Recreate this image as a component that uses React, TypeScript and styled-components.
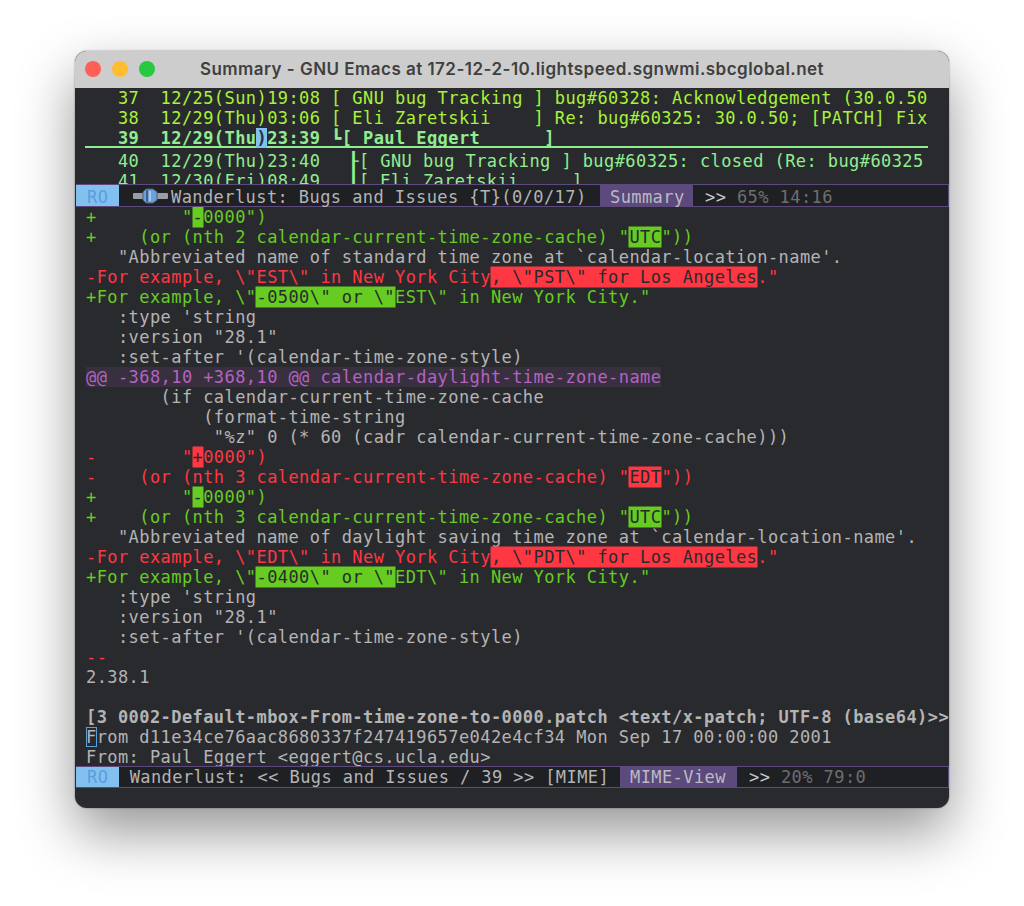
import * as React from 'react'
import styled, { createGlobalStyle } from 'styled-components'

const CELL = 10.64

const GlobalStyle = createGlobalStyle`
  html, body {
    margin: 0;
    background: #fff;
  }
`

const Page = styled.div`
  width: 1024px;
  height: 906px;
  padding: 51px 75px 0;
  box-sizing: border-box;
  overflow: hidden;
`

const Window = styled.div`
  width: 874px;
  height: 757px;
  display: flex;
  flex-direction: column;
  border-radius: 12px;
  overflow: hidden;
  background: #292a2e;
  box-shadow: 0 24px 56px rgba(0, 0, 0, 0.42), 0 0 2px rgba(0, 0, 0, 0.45);
  font-family: 'DejaVu Sans Mono', 'Liberation Mono', monospace;
  font-size: 17px;
  letter-spacing: 0.42px;
  color: #b4b4b4;
`

const TitleBar = styled.div`
  height: 37px;
  flex: none;
  display: flex;
  align-items: center;
  position: relative;
  padding: 0 0 2px 10px;
  box-sizing: border-box;
  gap: 11px;
  background: #cdcdcd;
`

const Light = styled.span<{ $color: string }>`
  width: 16px;
  height: 16px;
  border-radius: 50%;
  background: ${(p) => p.$color};
`

const Title = styled.div`
  position: absolute;
  left: 0;
  right: 0;
  text-align: center;
  font-family: Inter, 'Liberation Sans', sans-serif;
  font-size: 17px;
  font-weight: 600;
  letter-spacing: 0.47px;
  color: #3f3f3f;
`

const SummaryPane = styled.div`
  height: 96px;
  flex: none;
  overflow: hidden;
  padding-left: 11px;
`

const Row = styled.div<{ $color?: string }>`
  height: 20px;
  line-height: 20px;
  white-space: pre;
  color: ${(p) => p.$color ?? 'inherit'};
`

const SelectedRow = styled(Row)`
  width: 843px;
  margin: 0 0 3px -1px;
  padding-left: 1px;
  box-sizing: border-box;
  border-bottom: 2px solid #90ee90;
  font-weight: 700;
`

const Cursor = styled.span`
  background: #82c0f0;
  color: #24303a;
`

const TreeGap = styled.span`
  display: inline-block;
  width: ${CELL * 2.62}px;
`

const Modeline = styled.div<{ $height: number; $lineHeight: number }>`
  height: ${(p) => p.$height}px;
  flex: none;
  box-sizing: border-box;
  display: flex;
  align-items: stretch;
  margin-left: 1px;
  background: #1f2024;
  border: 1px solid #5b4a7b;
  border-left: none;
  line-height: ${(p) => p.$lineHeight}px;
  white-space: pre;
  color: #b4b4b4;
`

const ReadOnly = styled.span`
  width: 43px;
  flex: none;
  padding-left: 11px;
  box-sizing: border-box;
  background: #82c0f0;
  color: #5b9ede;
`

const BufferName = styled.span<{ $width: number }>`
  width: ${(p) => p.$width}px;
  flex: none;
  display: flex;
  align-items: flex-start;
`

const PlugSlot = styled.svg`
  flex: none;
  margin: 3px 3px 0 14px;
`

const MajorMode = styled.span<{ $width: number }>`
  width: ${(p) => p.$width}px;
  flex: none;
  padding-left: 10px;
  box-sizing: border-box;
  background: #5b4a7b;
  color: #bdb9c4;
`

const Position = styled.span`
  padding-left: 12px;
  color: #6e6e6e;
`

const Arrows = styled.span`
  color: #c8c8c8;
`

const Body = styled.div`
  height: 559px;
  flex: none;
  overflow: hidden;
  padding-left: 11px;
`

const Tone = {
  plain: '#b4b4b4',
  add: '#67cc21',
  del: '#ff3742',
  hunk: '#b463c2',
} as const

const Line = styled.div<{ $tone?: keyof typeof Tone; $bold?: boolean }>`
  height: 20px;
  line-height: 20px;
  white-space: pre;
  font-weight: ${(p) => (p.$bold ? 700 : 400)};
  color: ${(p) => Tone[p.$tone ?? 'plain']};
`

const Mark = styled.span<{ $tone: 'add' | 'del' }>`
  background: ${(p) => Tone[p.$tone]};
  color: #292a2e;
  box-shadow: 0 0 0 0.5px ${(p) => Tone[p.$tone]};
`

const HunkHeader = styled.span`
  background: #38303e;
`

const HollowCursor = styled.span`
  outline: 1px solid #5a9fd8;
  outline-offset: -1px;
`

const Plug = () => (
  <PlugSlot width="35" height="16" viewBox="0 0 35 16">
    <rect x="0" y="5" width="35" height="6" rx="1" fill="#9a9da2" />
    <path d="M10 4 L13 1 H20 L24 4 V12 L20 15 H13 L10 12 Z" fill="#6f9fd8" stroke="#46607f" strokeWidth="1" />
    <rect x="13" y="2" width="2" height="12" fill="#46607f" />
    <rect x="16" y="3" width="2" height="10" fill="#a9c8ea" />
  </PlugSlot>
)

const GREEN = '#a8f23a'
const LIGHT = '#90ee90'

export default function App() {
  return (
    <Page>
      <GlobalStyle />
      <Window>
        <TitleBar>
          <Light $color="#ff5f57" />
          <Light $color="#febc2e" />
          <Light $color="#28c840" />
          <Title>Summary - GNU Emacs at 172-12-2-10.lightspeed.sgnwmi.sbcglobal.net</Title>
        </TitleBar>

        <SummaryPane>
          <Row $color={GREEN}>{'   37  12/25(Sun)19:08 [ GNU bug Tracking ] bug#60328: Acknowledgement (30.0.50'}</Row>
          <Row $color={GREEN}>{'   38  12/29(Thu)03:06 [ Eli Zaretskii    ] Re: bug#60325: 30.0.50; [PATCH] Fix'}</Row>
          <SelectedRow $color={LIGHT}>
            {'   39  12/29(Thu'}
            <Cursor>)</Cursor>
            {'23:39 ┗[ Paul Eggert      ]'}
          </SelectedRow>
          <Row $color={LIGHT}>
            {'   40  12/29(Thu)23:40'}
            <TreeGap />
            {'┠[ GNU bug Tracking ] bug#60325: closed (Re: bug#60325'}
          </Row>
          <Row $color={LIGHT}>
            {'   41  12/30(Fri)08:49'}
            <TreeGap />
            {'┃[ Eli Zaretskii     ]'}
          </Row>
        </SummaryPane>

        <Modeline $height={23} $lineHeight={24}>
          <ReadOnly>RO</ReadOnly>
          <BufferName $width={481}>
            <Plug />
            Wanderlust: Bugs and Issues {'{T}'}(0/0/17)
          </BufferName>
          <MajorMode $width={93}>Summary</MajorMode>
          <Position>
            <Arrows>{'>>'}</Arrows>
            {' 65% 14:16'}
          </Position>
        </Modeline>

        <Body>
          <Line $tone="add">{'+        "'}<Mark $tone="add">-</Mark>{'0000")'}</Line>
          <Line $tone="add">{'+    (or (nth 2 calendar-current-time-zone-cache) "'}<Mark $tone="add">UTC</Mark>{'"))'}</Line>
          <Line>{'   "Abbreviated name of standard time zone at `calendar-location-name\'.'}</Line>
          <Line $tone="del">{'-For example, \\"EST\\" in New York City'}<Mark $tone="del">{', \\"PST\\" for Los Angeles'}</Mark>{'."'}</Line>
          <Line $tone="add">{'+For example, \\"'}<Mark $tone="add">{'-0500\\" or \\"'}</Mark>{'EST\\" in New York City."'}</Line>
          <Line>{"   :type 'string"}</Line>
          <Line>{'   :version "28.1"'}</Line>
          <Line>{"   :set-after '(calendar-time-zone-style)"}</Line>
          <Line $tone="hunk"><HunkHeader>{'@@ -368,10 +368,10 @@ calendar-daylight-time-zone-name'}</HunkHeader></Line>
          <Line>{'       (if calendar-current-time-zone-cache'}</Line>
          <Line>{'           (format-time-string'}</Line>
          <Line>{'            "%z" 0 (* 60 (cadr calendar-current-time-zone-cache)))'}</Line>
          <Line $tone="del">{'-        "'}<Mark $tone="del">+</Mark>{'0000")'}</Line>
          <Line $tone="del">{'-    (or (nth 3 calendar-current-time-zone-cache) "'}<Mark $tone="del">EDT</Mark>{'"))'}</Line>
          <Line $tone="add">{'+        "'}<Mark $tone="add">-</Mark>{'0000")'}</Line>
          <Line $tone="add">{'+    (or (nth 3 calendar-current-time-zone-cache) "'}<Mark $tone="add">UTC</Mark>{'"))'}</Line>
          <Line>{'   "Abbreviated name of daylight saving time zone at `calendar-location-name\'.'}</Line>
          <Line $tone="del">{'-For example, \\"EDT\\" in New York City'}<Mark $tone="del">{', \\"PDT\\" for Los Angeles'}</Mark>{'."'}</Line>
          <Line $tone="add">{'+For example, \\"'}<Mark $tone="add">{'-0400\\" or \\"'}</Mark>{'EDT\\" in New York City."'}</Line>
          <Line>{"   :type 'string"}</Line>
          <Line>{'   :version "28.1"'}</Line>
          <Line>{"   :set-after '(calendar-time-zone-style)"}</Line>
          <Line $tone="del">--</Line>
          <Line>2.38.1</Line>
          <Line />
          <Line $bold>{'[3 0002-Default-mbox-From-time-zone-to-0000.patch <text/x-patch; UTF-8 (base64)>>'}</Line>
          <Line><HollowCursor>F</HollowCursor>{'rom d11e34ce76aac8680337f247419657e042e4cf34 Mon Sep 17 00:00:00 2001'}</Line>
          <Line>{'From: Paul Eggert <eggert@cs.ucla.edu>'}</Line>
        </Body>

        <Modeline $height={22} $lineHeight={20}>
          <ReadOnly>RO</ReadOnly>
          <BufferName $width={501}>{' Wanderlust: << Bugs and Issues / 39 >> [MIME]'}</BufferName>
          <MajorMode $width={117}>MIME-View</MajorMode>
          <Position>
            <Arrows>{'>>'}</Arrows>
            {' 20% 79:0'}
          </Position>
        </Modeline>
      </Window>
    </Page>
  )
}
